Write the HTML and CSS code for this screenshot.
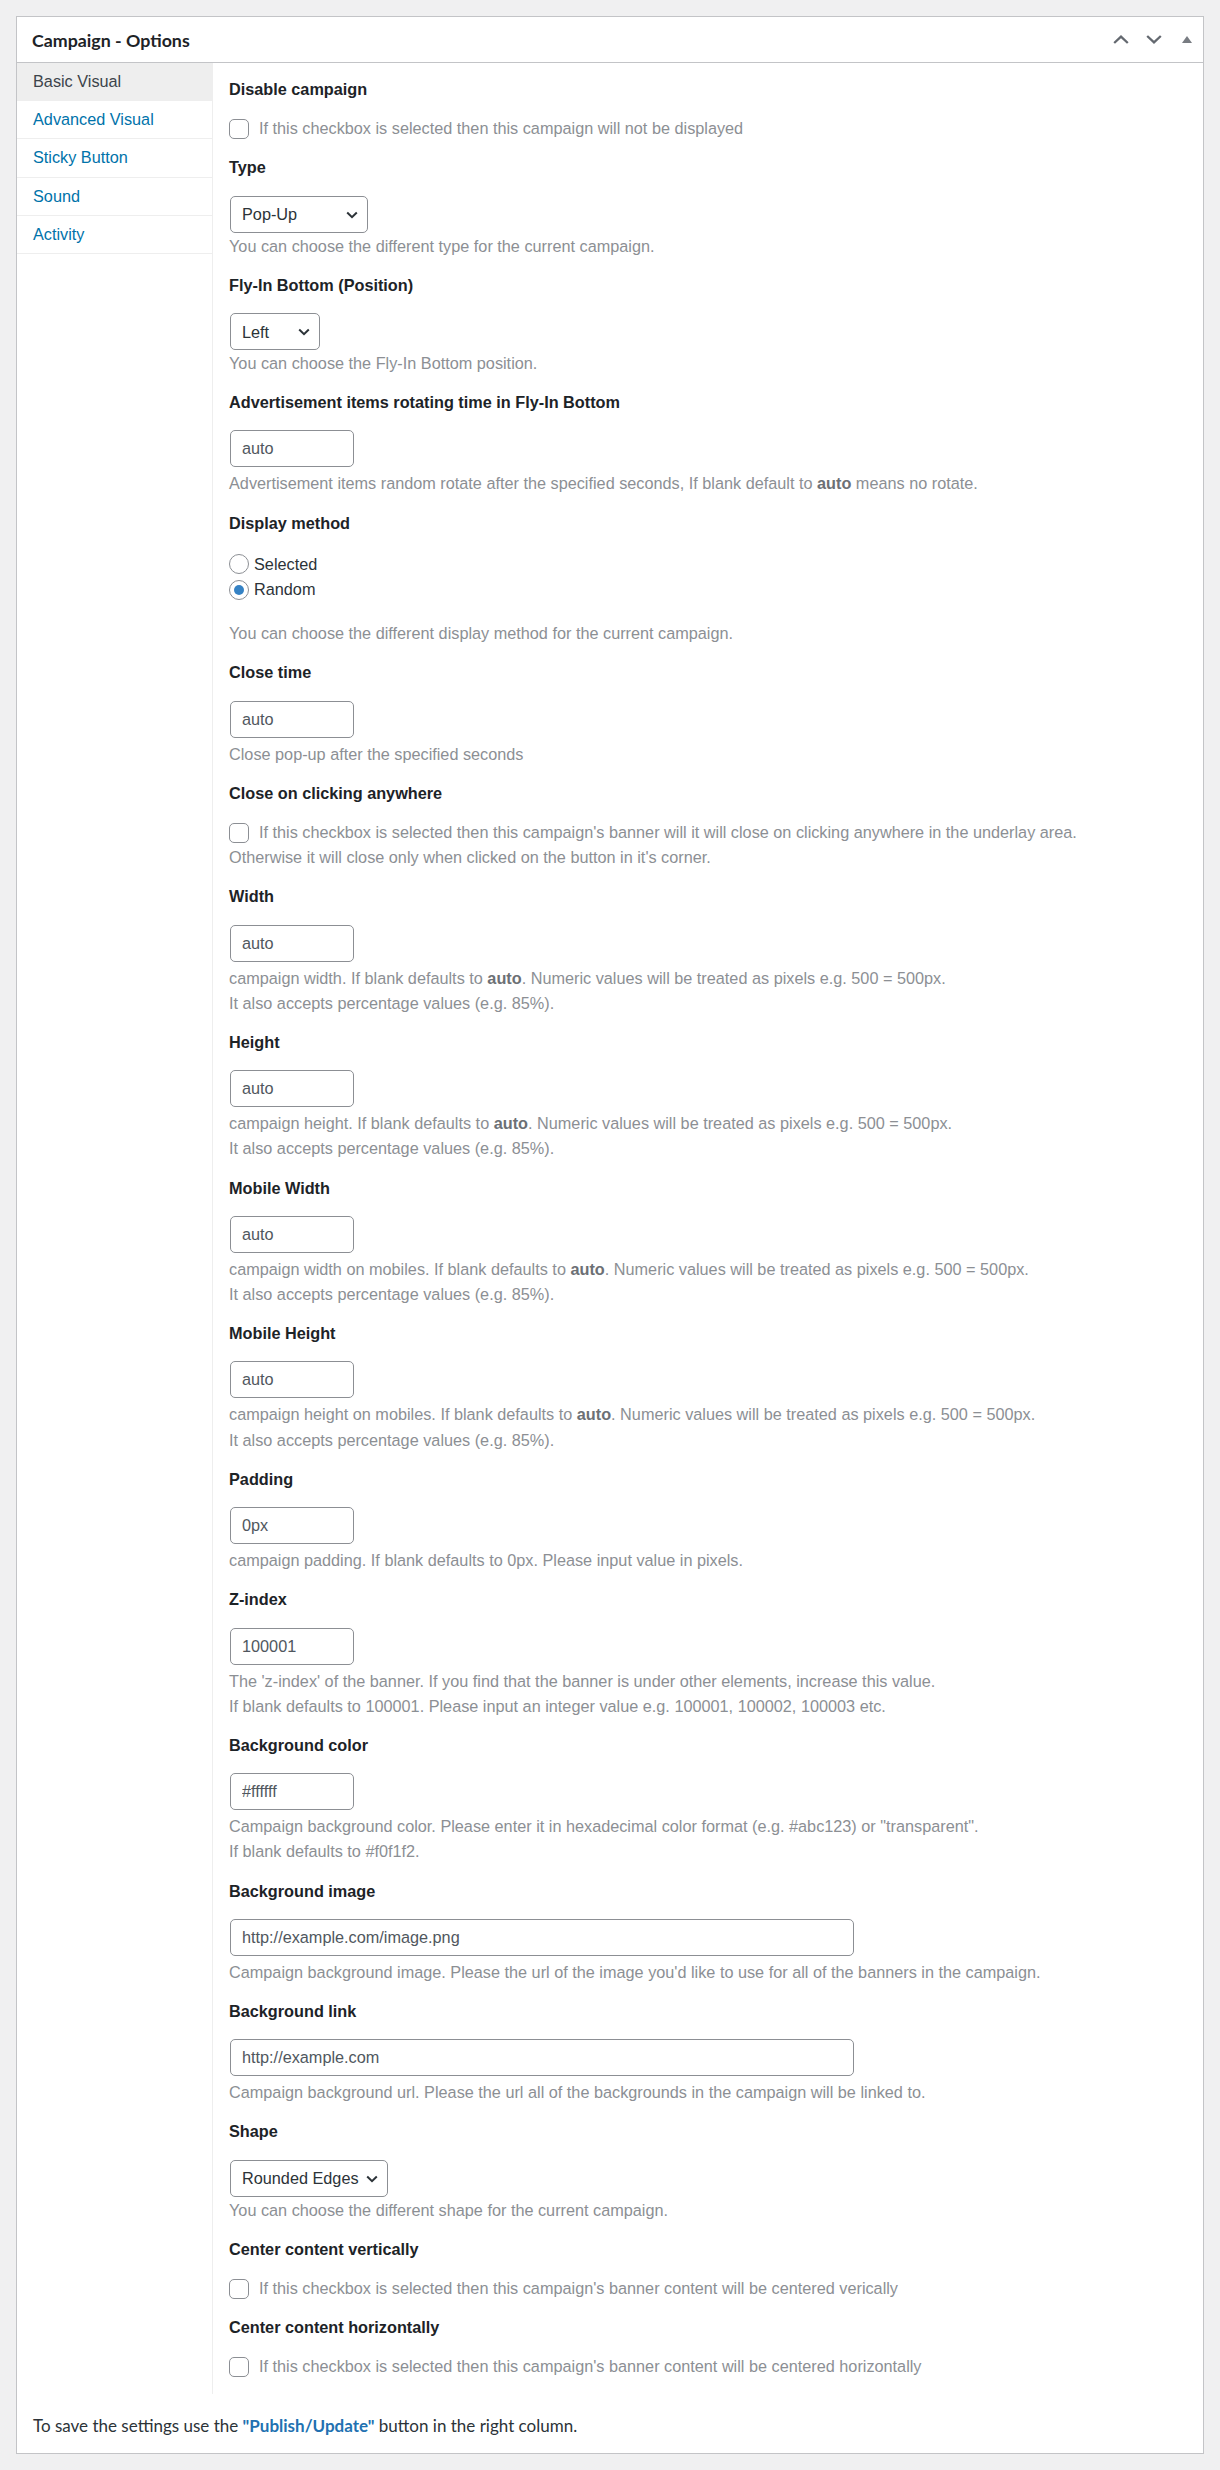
FILE: index.html
```html
<!DOCTYPE html>
<html lang="en">
<head>
<meta charset="utf-8">
<title>Campaign - Options</title>
<link rel="stylesheet" href="styles.css">
</head>
<body>
<div class="postbox">
  <div class="postbox-header">
    <h2 class="hndle">Campaign - Options</h2>
    <div class="handle-actions">
      <button class="handle-btn" type="button" aria-label="Move up">
        <svg width="16" height="9" viewBox="0 0 16 9"><polyline points="1.2,8 8,1.6 14.8,8" fill="none" stroke="#646970" stroke-width="2.3"/></svg>
      </button>
      <button class="handle-btn" type="button" aria-label="Move down">
        <svg width="16" height="9" viewBox="0 0 16 9"><polyline points="1.2,1 8,7.4 14.8,1" fill="none" stroke="#646970" stroke-width="2.3"/></svg>
      </button>
      <button class="handle-btn" type="button" aria-label="Toggle panel">
        <svg width="10" height="7" viewBox="0 0 10 7"><polygon points="0,7 5,0 10,7" fill="#787c82"/></svg>
      </button>
    </div>
  </div>
  <div class="inside">
    <div class="tabs">
      <ul class="tab-nav">
        <li class="active">Basic Visual</li>
        <li><a href="#">Advanced Visual</a></li>
        <li><a href="#">Sticky Button</a></li>
        <li><a href="#">Sound</a></li>
        <li><a href="#">Activity</a></li>
      </ul>
      <div class="tab-panel">

        <div class="field">
          <p class="field-label tight">Disable campaign</p>
          <label class="check"><input type="checkbox" class="cb"><span>If this checkbox is selected then this campaign will not be displayed</span></label>
        </div>

        <div class="field">
          <p class="field-label">Type</p>
          <span class="select-wrap w-type"><select><option>Pop-Up</option><option>Fly-In Bottom</option></select><svg width="12" height="8" viewBox="0 0 12 8"><polyline points="1.2,1.5 6,6.2 10.8,1.5" fill="none" stroke="#2c3338" stroke-width="2"/></svg></span>
          <p class="desc after-select">You can choose the different type for the current campaign.</p>
        </div>

        <div class="field">
          <p class="field-label">Fly-In Bottom (Position)</p>
          <span class="select-wrap w-pos"><select><option>Left</option><option>Right</option></select><svg width="12" height="8" viewBox="0 0 12 8"><polyline points="1.2,1.5 6,6.2 10.8,1.5" fill="none" stroke="#2c3338" stroke-width="2"/></svg></span>
          <p class="desc after-select">You can choose the Fly-In Bottom position.</p>
        </div>

        <div class="field">
          <p class="field-label">Advertisement items rotating time in Fly-In Bottom</p>
          <input type="text" class="text-input" placeholder="auto">
          <p class="desc">Advertisement items random rotate after the specified seconds, If blank default to <strong>auto</strong> means no rotate.</p>
        </div>

        <div class="field">
          <p class="field-label radios-label">Display method</p>
          <label class="radio-row"><input type="radio" name="dm" class="rb"><span>Selected</span></label>
          <label class="radio-row"><input type="radio" name="dm" class="rb" checked><span>Random</span></label>
          <p class="desc after-radios">You can choose the different display method for the current campaign.</p>
        </div>

        <div class="field">
          <p class="field-label">Close time</p>
          <input type="text" class="text-input" placeholder="auto">
          <p class="desc">Close pop-up after the specified seconds</p>
        </div>

        <div class="field">
          <p class="field-label tight">Close on clicking anywhere</p>
          <label class="check"><input type="checkbox" class="cb"><span>If this checkbox is selected then this campaign's banner will it will close on clicking anywhere in the underlay area.</span></label>
          <p class="desc flush">Otherwise it will close only when clicked on the button in it's corner.</p>
        </div>

        <div class="field">
          <p class="field-label">Width</p>
          <input type="text" class="text-input" placeholder="auto">
          <p class="desc">campaign width. If blank defaults to <strong>auto</strong>. Numeric values will be treated as pixels e.g. 500 = 500px.<br>It also accepts percentage values (e.g. 85%).</p>
        </div>

        <div class="field">
          <p class="field-label">Height</p>
          <input type="text" class="text-input" placeholder="auto">
          <p class="desc">campaign height. If blank defaults to <strong>auto</strong>. Numeric values will be treated as pixels e.g. 500 = 500px.<br>It also accepts percentage values (e.g. 85%).</p>
        </div>

        <div class="field">
          <p class="field-label">Mobile Width</p>
          <input type="text" class="text-input" placeholder="auto">
          <p class="desc">campaign width on mobiles. If blank defaults to <strong>auto</strong>. Numeric values will be treated as pixels e.g. 500 = 500px.<br>It also accepts percentage values (e.g. 85%).</p>
        </div>

        <div class="field">
          <p class="field-label">Mobile Height</p>
          <input type="text" class="text-input" placeholder="auto">
          <p class="desc">campaign height on mobiles. If blank defaults to <strong>auto</strong>. Numeric values will be treated as pixels e.g. 500 = 500px.<br>It also accepts percentage values (e.g. 85%).</p>
        </div>

        <div class="field">
          <p class="field-label">Padding</p>
          <input type="text" class="text-input" placeholder="0px">
          <p class="desc">campaign padding. If blank defaults to 0px. Please input value in pixels.</p>
        </div>

        <div class="field">
          <p class="field-label">Z-index</p>
          <input type="text" class="text-input" placeholder="100001">
          <p class="desc">The 'z-index' of the banner. If you find that the banner is under other elements, increase this value.<br>If blank defaults to 100001. Please input an integer value e.g. 100001, 100002, 100003 etc.</p>
        </div>

        <div class="field">
          <p class="field-label">Background color</p>
          <input type="text" class="text-input" placeholder="#ffffff">
          <p class="desc">Campaign background color. Please enter it in hexadecimal color format (e.g. #abc123) or "transparent".<br>If blank defaults to #f0f1f2.</p>
        </div>

        <div class="field">
          <p class="field-label">Background image</p>
          <input type="text" class="text-input wide" placeholder="http://example.com/image.png">
          <p class="desc">Campaign background image. Please the url of the image you'd like to use for all of the banners in the campaign.</p>
        </div>

        <div class="field">
          <p class="field-label">Background link</p>
          <input type="text" class="text-input wide" placeholder="http://example.com">
          <p class="desc">Campaign background url. Please the url all of the backgrounds in the campaign will be linked to.</p>
        </div>

        <div class="field">
          <p class="field-label">Shape</p>
          <span class="select-wrap w-shape"><select><option>Rounded Edges</option><option>Square</option></select><svg width="12" height="8" viewBox="0 0 12 8"><polyline points="1.2,1.5 6,6.2 10.8,1.5" fill="none" stroke="#2c3338" stroke-width="2"/></svg></span>
          <p class="desc after-select">You can choose the different shape for the current campaign.</p>
        </div>

        <div class="field">
          <p class="field-label tight">Center content vertically</p>
          <label class="check"><input type="checkbox" class="cb"><span>If this checkbox is selected then this campaign's banner content will be centered verically</span></label>
        </div>

        <div class="field">
          <p class="field-label tight">Center content horizontally</p>
          <label class="check"><input type="checkbox" class="cb"><span>If this checkbox is selected then this campaign's banner content will be centered horizontally</span></label>
        </div>

      </div>
    </div>
    <p class="save-note">To save the settings use the <strong class="save-link">"Publish/Update"</strong> button in the right column.</p>
  </div>
</div>
</body>
</html>
```

FILE: styles.css
```css
* {
  box-sizing: border-box;
}

body {
  margin: 16px;
  background: #f0f0f1;
  font-family: "Liberation Sans", Arial, sans-serif;
  font-size: 16.25px;
  line-height: 25.2px;
  color: #3c434a;
}

.postbox {
  background: #fff;
  border: 1px solid #c3c4c7;
}

.postbox-header {
  display: flex;
  align-items: center;
  justify-content: space-between;
  height: 46px;
  border-bottom: 1px solid #c3c4c7;
}

.hndle {
  margin: 0;
  padding-left: 15px;
  font-family: Lato, "Open Sans", sans-serif;
  font-size: 17.8px;
  font-weight: 700;
  color: #1d2327;
  line-height: 24px;
}

.handle-actions {
  display: flex;
  height: 45px;
}

.handle-btn {
  width: 33px;
  height: 45px;
  padding: 0;
  margin: 0;
  border: 0;
  background: none;
  display: flex;
  align-items: center;
  justify-content: center;
}

.tabs {
  display: flex;
  align-items: stretch;
}

.tab-nav {
  flex: none;
  width: 196px;
  margin: 0;
  padding: 0;
  list-style: none;
  border-right: 1px solid #eeeeee;
}

.tab-nav li {
  padding: 6px 16px;
  border-bottom: 1px solid #eeeeee;
  line-height: 25.2px;
  color: #3c434a;
}

.tab-nav li.active {
  background: #eeeeee;
}

.tab-nav a {
  color: #0073aa;
  text-decoration: none;
}

.tab-panel {
  flex: 1;
  padding: 14px 16px 0 16px;
}

.field {
  margin-bottom: 14px;
}

.field-label {
  margin: 0 0 15px;
  font-weight: 700;
  color: #1d2327;
}

.field-label.tight {
  margin-bottom: 14px;
}

.field-label.radios-label {
  margin-bottom: 16px;
}

.text-input {
  display: block;
  width: 124px;
  height: 37px;
  margin: 0 1px;
  padding: 0 11px;
  border: 1px solid #8c8f94;
  border-radius: 5px;
  background: #fff;
  font-family: inherit;
  font-size: 16.25px;
  color: #2c3338;
}

.text-input::placeholder {
  color: #50575e;
  opacity: 1;
}

.text-input.wide {
  width: 624px;
}

.select-wrap {
  position: relative;
  display: block;
  height: 37px;
  margin-left: 1px;
}

.select-wrap.w-type {
  width: 138px;
}

.select-wrap.w-pos {
  width: 90px;
}

.select-wrap.w-shape {
  width: 158px;
}

.select-wrap select {
  appearance: none;
  -webkit-appearance: none;
  width: 100%;
  height: 37px;
  margin: 0;
  padding: 0 28px 0 11px;
  border: 1px solid #8c8f94;
  border-radius: 5px;
  background: #fff;
  font-family: inherit;
  font-size: 16.25px;
  color: #2c3338;
}

.select-wrap svg {
  position: absolute;
  right: 10px;
  top: 15px;
  pointer-events: none;
}

.desc {
  margin: 4px 0 0;
  color: #8c8f94;
}

.desc strong {
  color: #6c7075;
}

.desc.after-select {
  margin-top: 1px;
}

.desc.after-radios {
  margin-top: 19px;
}

.desc.flush {
  margin-top: 0;
}

.check {
  display: flex;
  align-items: center;
  gap: 10px;
  color: #8c8f94;
}

.cb {
  appearance: none;
  -webkit-appearance: none;
  flex: none;
  width: 20px;
  height: 20px;
  margin: 0;
  border: 1px solid #8c8f94;
  border-radius: 5px;
  background: #fff;
}

.radio-row {
  display: flex;
  align-items: center;
  gap: 5px;
  color: #2c3338;
}

.rb {
  appearance: none;
  -webkit-appearance: none;
  flex: none;
  width: 20px;
  height: 20px;
  margin: 0;
  border: 1px solid #8c8f94;
  border-radius: 50%;
  background: #fff;
  display: grid;
  place-items: center;
}

.rb:checked::before {
  content: "";
  width: 10px;
  height: 10px;
  border-radius: 50%;
  background: #3582c4;
}

.save-note {
  margin: 0;
  padding: 19px 16px 15px;
  font-family: Lato, "Open Sans", sans-serif;
  font-size: 17px;
  line-height: 25.2px;
  color: #2c3338;
}

.save-link {
  color: #2271b1;
  font-weight: 700;
}
```
